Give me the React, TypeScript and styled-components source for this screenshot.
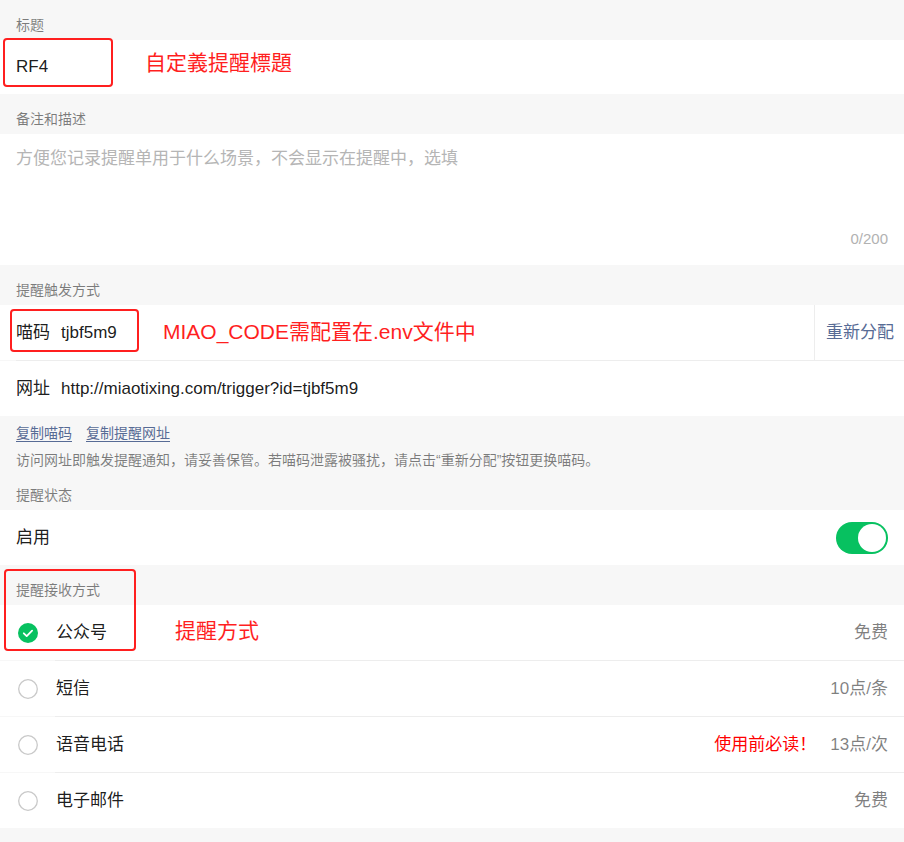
import React from "react";
import styled, { createGlobalStyle } from "styled-components";

const FONT = `"Liberation Sans", "Noto Sans CJK SC", sans-serif`;
const GREEN = "#07c160";
const LINK = "#576b95";
const MARK = "#ff1f1f";

const GlobalStyle = createGlobalStyle`
	html, body {
		margin: 0;
		padding: 0;
		background: #f7f7f7;
	}
	* {
		box-sizing: border-box;
	}
`;

type Option = {
	name: string;
	price: string;
	notice?: string;
	checked?: boolean;
};

const OPTIONS: Option[] = [
	{ name: "公众号", price: "免费", checked: true },
	{ name: "短信", price: "10点/条" },
	{ name: "语音电话", price: "13点/次", notice: "使用前必读！" },
	{ name: "电子邮件", price: "免费" },
];

const CheckIcon = ({ checked }: { checked?: boolean }) =>
	checked ? (
		<svg width="20" height="20" viewBox="0 0 20 20">
			<circle cx="10" cy="10" r="10" fill={GREEN} />
			<path
				d="M5.8 10.3l2.9 2.8 5.4-5.4"
				fill="none"
				stroke="#fff"
				strokeWidth="1.8"
				strokeLinecap="round"
				strokeLinejoin="round"
			/>
		</svg>
	) : (
		<svg width="20" height="20" viewBox="0 0 20 20">
			<circle cx="10" cy="10" r="9.3" fill="none" stroke="#c9c9c9" strokeWidth="1.3" />
		</svg>
	);

const App = () => (
	<Page>
		<GlobalStyle />

		<SectionTitle>标题</SectionTitle>
		<Cell height={54}>
			<PlainInput defaultValue="RF4" />
		</Cell>

		<SectionTitle>备注和描述</SectionTitle>
		<TextareaCell>
			<Textarea placeholder="方便您记录提醒单用于什么场景，不会显示在提醒中，选填" />
			<Counter>0/200</Counter>
		</TextareaCell>

		<SectionTitle>提醒触发方式</SectionTitle>
		<Cell>
			<CellLabel>喵码</CellLabel>
			<CellValue>tjbf5m9</CellValue>
			<ReassignButton>重新分配</ReassignButton>
		</Cell>
		<Cell divider={16}>
			<CellLabel>网址</CellLabel>
			<CellValue>http://miaotixing.com/trigger?id=tjbf5m9</CellValue>
		</Cell>

		<Tips>
			<LinkRow>
				<TipLink>复制喵码</TipLink>
				<TipLink>复制提醒网址</TipLink>
			</LinkRow>
			<TipText>
				访问网址即触发提醒通知，请妥善保管。若喵码泄露被骚扰，请点击“重新分配”按钮更换喵码。
			</TipText>
		</Tips>

		<SectionTitle>提醒状态</SectionTitle>
		<Cell>
			<CellText>启用</CellText>
			<Switch on />
		</Cell>

		<SectionTitle>提醒接收方式</SectionTitle>
		{OPTIONS.map((option, i) => (
			<Cell key={option.name} divider={i > 0 ? 55 : undefined}>
				<IconSlot>
					<CheckIcon checked={option.checked} />
				</IconSlot>
				<CellText>{option.name}</CellText>
				{option.notice && <Notice>{option.notice}</Notice>}
				<Price>{option.price}</Price>
			</Cell>
		))}

		{/* red annotations drawn over the screenshot */}
		<MarkBox style={{ left: 3, top: 38, width: 110, height: 49 }} />
		<MarkText style={{ left: 145, top: 50 }}>自定義提醒標題</MarkText>
		<MarkBox style={{ left: 10, top: 309, width: 129, height: 43 }} />
		<MarkText style={{ left: 163, top: 319 }}>MIAO_CODE需配置在.env文件中</MarkText>
		<MarkBox style={{ left: 4, top: 569, width: 132, height: 82 }} />
		<MarkText style={{ left: 175, top: 618 }}>提醒方式</MarkText>
	</Page>
);

const Page = styled.div`
	position: relative;
	width: 904px;
	min-height: 842px;
	padding-bottom: 14px;
	background: #f7f7f7;
	font-family: ${FONT};
	color: rgba(0, 0, 0, 0.9);
`;

const SectionTitle = styled.div`
	height: 40px;
	padding: 16px 16px 0;
	font-size: 14px;
	line-height: 18px;
	color: rgba(0, 0, 0, 0.5);
`;

const Cell = styled.div<{ height?: number; divider?: number }>`
	position: relative;
	display: flex;
	align-items: center;
	height: ${({ height }) => height || 55}px;
	padding: 0 16px;
	background: #fff;
	font-size: 17px;
	line-height: 24px;
	${({ divider }) =>
		divider !== undefined
			? `
		margin-top: 1px;
		&:before {
			content: "";
			position: absolute;
			top: -1px;
			left: ${divider}px;
			right: 0;
			border-top: 1px solid #ededed;
		}
	`
			: ""}
`;

const PlainInput = styled.input`
	width: 100%;
	border: none;
	outline: none;
	padding: 0;
	background: transparent;
	font-family: ${FONT};
	font-size: 17px;
	line-height: 24px;
	color: rgba(0, 0, 0, 0.9);
`;

const TextareaCell = styled.div`
	display: flex;
	flex-direction: column;
	height: 131px;
	padding: 13px 16px 16px;
	background: #fff;
`;

const Textarea = styled.textarea`
	flex: 1;
	border: none;
	outline: none;
	resize: none;
	padding: 0;
	font-family: ${FONT};
	font-size: 17px;
	line-height: 24px;
	color: rgba(0, 0, 0, 0.9);

	&::placeholder {
		color: #b5b5b5;
	}
`;

const Counter = styled.div`
	text-align: right;
	font-size: 15px;
	line-height: 20px;
	color: #b2b2b2;
`;

const CellLabel = styled.span`
	margin-right: 11px;
`;

const CellValue = styled.span`
	flex: 1;
`;

const CellText = styled.span`
	flex: 1;
`;

const ReassignButton = styled.div`
	align-self: stretch;
	display: flex;
	align-items: center;
	margin-right: -16px;
	padding: 0 10px 0 11px;
	border-left: 1px solid #ededed;
	color: ${LINK};
`;

const Tips = styled.div`
	padding: 7px 16px 0;
`;

const LinkRow = styled.div`
	display: flex;
	gap: 14px;
	font-size: 14px;
	line-height: 20px;
`;

const TipLink = styled.span`
	color: ${LINK};
	text-decoration: underline;
	text-underline-offset: 3px;
`;

const TipText = styled.div`
	margin-top: 8px;
	font-size: 14px;
	line-height: 19px;
	color: rgba(0, 0, 0, 0.5);
`;

const Switch = styled.span<{ on?: boolean }>`
	position: relative;
	width: 52px;
	height: 32px;
	border-radius: 16px;
	background: ${({ on }) => (on ? GREEN : "#e5e5e5")};

	&:after {
		content: "";
		position: absolute;
		top: 2px;
		left: ${({ on }) => (on ? 22 : 2)}px;
		width: 28px;
		height: 28px;
		border-radius: 50%;
		background: #fff;
	}
`;

const IconSlot = styled.span`
	display: flex;
	width: 40px;
	margin-left: 2px;
	margin-right: -2px;
`;

const Notice = styled.span`
	margin-right: 14px;
	color: #ff0000;
`;

const Price = styled.span`
	color: rgba(0, 0, 0, 0.5);
`;

const MarkBox = styled.div`
	position: absolute;
	border: 2.5px solid ${MARK};
	border-radius: 4px;
	pointer-events: none;
`;

const MarkText = styled.div`
	position: absolute;
	font-size: 21px;
	line-height: 26px;
	color: ${MARK};
	white-space: nowrap;
	pointer-events: none;
`;

export default App;
